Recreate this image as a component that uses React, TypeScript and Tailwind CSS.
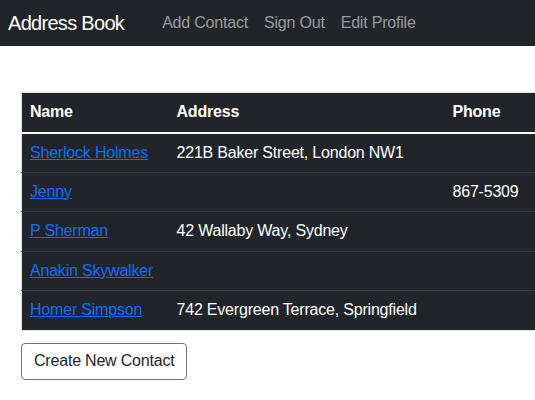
import React from "react";

const rows = [
  { name: "Sherlock Holmes", address: "221B Baker Street, London NW1", phone: "" },
  { name: "Jenny", address: "", phone: "867-5309" },
  { name: "P Sherman", address: "42 Wallaby Way, Sydney", phone: "" },
  { name: "Anakin Skywalker", address: "", phone: "" },
  { name: "Homer Simpson", address: "742 Evergreen Terrace, Springfield", phone: "" },
];

export default function App() {
  return (
    <div
      className="w-[535px] h-[400px] bg-white overflow-hidden text-[#212529]"
      style={{ fontFamily: '"Liberation Sans", Arial, sans-serif' }}
    >
      <nav className="h-[46px] bg-[#212529] flex items-center pl-2">
        <span className="text-[20px] text-white tracking-[-0.7px] mr-[38px]">Address Book</span>
        <div className="flex gap-4 text-[16px] text-[rgba(255,255,255,0.55)] tracking-[-0.2px]">
          <span>Add Contact</span>
          <span>Sign Out</span>
          <span>Edit Profile</span>
        </div>
      </nav>
      <div className="pl-[21px] pt-[46px]">
        <table className="w-[514px] table-fixed border-collapse bg-[#212529] text-white text-[16px] tracking-[-0.2px] border border-[#dee2e6]">
          <colgroup>
            <col className="w-[147px]" />
            <col className="w-[276px]" />
            <col className="w-[91px]" />
          </colgroup>
          <thead>
            <tr className="h-[40px] border-b-2 border-white">
              <th className="text-left font-bold px-2">Name</th>
              <th className="text-left font-bold px-2">Address</th>
              <th className="text-left font-bold px-2">Phone</th>
            </tr>
          </thead>
          <tbody>
            {rows.map((r, i) => (
              <tr
                key={r.name}
                className={
                  i < rows.length - 1
                    ? "h-[39.5px] border-b border-[#373b3e]"
                    : "h-[39.5px]"
                }
              >
                <td className="px-2 whitespace-nowrap">
                  <a href="#" className="text-[#0d6efd] underline">
                    {r.name}
                  </a>
                </td>
                <td className="px-2 whitespace-nowrap">{r.address}</td>
                <td className="px-2 whitespace-nowrap">{r.phone}</td>
              </tr>
            ))}
          </tbody>
        </table>
        <button className="mt-3 h-[37px] px-3 border border-[#6c757d] rounded-[4px] text-[16px] text-[#212529] bg-white tracking-[-0.2px]">
          Create New Contact
        </button>
      </div>
    </div>
  );
}
